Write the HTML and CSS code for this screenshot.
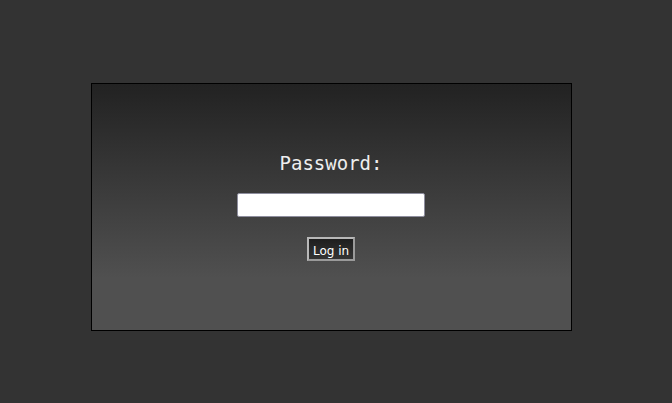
FILE: index.html
```html
<!DOCTYPE html>
<html>
<head>
<meta charset="utf-8">
<link rel="stylesheet" href="styles.css">
</head>
<body>
<div class="page">
  <form class="box" onsubmit="return false">
    <label class="label" for="pw">Password:</label>
    <input class="field" id="pw" type="password">
    <button class="btn" type="submit">Log in</button>
  </form>
</div>
</body>
</html>
```

FILE: styles.css
```css
html, body {
  margin: 0;
  padding: 0;
  background: #333333;
  height: 100%;
}
.page {
  padding: 83px 0 0 91px;
}
.box {
  box-sizing: border-box;
  width: 481px;
  height: 248px;
  border: 1px solid #000;
  background: linear-gradient(to bottom, #222222 0%, #505050 79%, #505050 100%);
  display: flex;
  flex-direction: column;
  align-items: center;
  padding: 68px 1px 0 0;
  margin: 0;
}
.label {
  font-family: "DejaVu Sans Mono", monospace;
  font-size: 19px;
  line-height: 22px;
  color: #eeeeee;
  height: 22px;
}
.field {
  box-sizing: border-box;
  width: 188px;
  height: 24px;
  margin: 19px 0 0 0;
  border: 1px solid #8e8e9e;
  border-radius: 2px;
  background: #fff;
  padding: 0 4px;
  outline: none;
}
.btn {
  box-sizing: border-box;
  width: 48px;
  height: 24px;
  margin-top: 20px;
  padding: 4px 0 0 0;
  border: 2px solid #b8b8b8;
  border-right-color: #9a9a9a;
  border-bottom-color: #9a9a9a;
  background: linear-gradient(to bottom, #1e1e1e, #343434);
  color: #ffffff;
  font-family: "DejaVu Sans", sans-serif;
  font-size: 12px;
  line-height: 16px;
  cursor: pointer;
}
```
